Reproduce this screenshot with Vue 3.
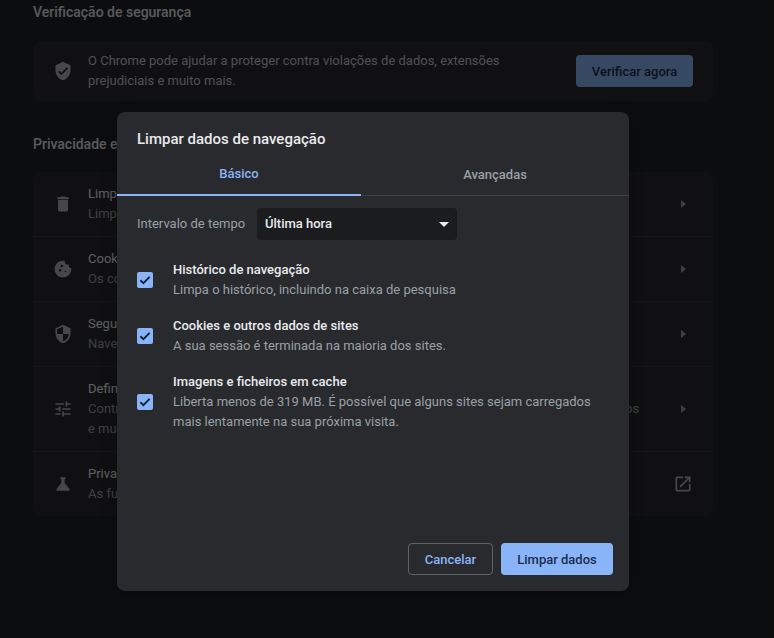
<template>
  <div class="page">
    <!-- Definições por trás do diálogo -->
    <div class="settings">
      <h2 class="section-title first">Verificação de segurança</h2>
      <div class="card check-card">
        <svg class="icon" viewBox="0 0 24 24"><path d="M12 1L3 5v6c0 5.55 3.84 10.74 9 12 5.16-1.26 9-6.45 9-12V5l-9-4zm-2 16l-4-4 1.41-1.41L10 14.17l6.59-6.59L18 9l-8 8z" /></svg>
        <p class="check-text">O Chrome pode ajudar a proteger contra violações de dados, extensões prejudiciais e muito mais.</p>
        <button class="check-btn">Verificar agora</button>
      </div>

      <h2 class="section-title">Privacidade e segurança</h2>
      <div class="card">
        <div class="row" v-for="row in linhas" :key="row.titulo">
          <svg class="icon" viewBox="0 0 24 24"><path :d="row.icon" fill-rule="evenodd" /></svg>
          <div class="row-text">
            <div class="row-title">{{ row.titulo }}</div>
            <div class="row-sub">{{ row.texto }}</div>
          </div>
          <svg v-if="row.externo" class="ext" viewBox="0 0 24 24"><path d="M19 19H5V5h7V3H5c-1.11 0-2 .9-2 2v14c0 1.1.89 2 2 2h14c1.1 0 2-.9 2-2v-7h-2v7zM14 3v2h3.59l-9.83 9.83 1.41 1.41L19 6.41V10h2V3h-7z" /></svg>
          <span v-else class="arrow"></span>
        </div>
      </div>
    </div>

    <div class="backdrop"></div>

    <!-- Diálogo -->
    <div class="dialog">
      <h1 class="dialog-title">Limpar dados de navegação</h1>

      <div class="tabs">
        <div class="tab active">Básico</div>
        <div class="tab">Avançadas</div>
      </div>

      <div class="dialog-body">
        <div class="interval">
          <span class="interval-label">Intervalo de tempo</span>
          <div class="select">
            <span>Última hora</span>
            <span class="caret"></span>
          </div>
        </div>

        <div class="item" v-for="item in opcoes" :key="item.titulo">
          <span class="checkbox">
            <svg viewBox="0 0 16 16"><path d="M3.4 8.2l3 3 6.2-6.3" fill="none" stroke="#15233f" stroke-width="2" /></svg>
          </span>
          <div>
            <div class="item-title">{{ item.titulo }}</div>
            <div class="item-sub">{{ item.texto }}</div>
          </div>
        </div>
      </div>

      <div class="footer">
        <button class="btn cancel">Cancelar</button>
        <button class="btn primary">Limpar dados</button>
      </div>
    </div>
  </div>
</template>

<script setup>
const COOKIE = 'M21.95 10.99c-1.79-.03-3.7-1.95-2.68-4.22-2.98 1-5.77-1.59-5.19-4.56C6.95.71 2 6.58 2 12c0 5.52 4.48 10 10 10 5.89 0 10.54-5.08 9.95-11.01zM8.5 15a1.5 1.5 0 1 1 0-3 1.5 1.5 0 0 1 0 3zm2-5a1.5 1.5 0 1 1 0-3 1.5 1.5 0 0 1 0 3zm4.5 6a1 1 0 1 1 0-2 1 1 0 0 1 0 2z'

const linhas = [
  {
    titulo: 'Limpar dados de navegação',
    texto: 'Limpar histórico, cookies, cache e muito mais',
    icon: 'M6 19c0 1.1.9 2 2 2h8c1.1 0 2-.9 2-2V7H6v12zM19 4h-3.5l-1-1h-5l-1 1H5v2h14V4z'
  },
  {
    titulo: 'Cookies e outros dados de sites',
    texto: 'Os cookies de terceiros estão bloqueados no modo de navegação anónima',
    icon: COOKIE
  },
  {
    titulo: 'Segurança',
    texto: 'Navegação segura (proteção contra Websites perigosos) e outras definições de segurança',
    icon: 'M12 1L3 5v6c0 5.55 3.84 10.74 9 12 5.16-1.26 9-6.45 9-12V5l-9-4zm0 10.99h7c-.53 4.12-3.28 7.79-7 8.94V12H5V6.3l7-3.11v8.8z'
  },
  {
    titulo: 'Definições de sites',
    texto: 'Controla as informações que os sites podem utilizar e mostrar (a localização, câmara, anúncios e muito mais)',
    icon: 'M3 17v2h6v-2H3zM3 5v2h10V5H3zm10 16v-2h8v-2h-8v-2h-2v6h2zM7 9v2H3v2h4v2h2V9H7zm14 4v-2H11v2h10zm-6-4h2V7h4V5h-4V3h-2v6z'
  },
  {
    titulo: 'Privacy Sandbox',
    texto: 'As funcionalidades de avaliação estão ativadas',
    icon: 'M19.8 18.4L14 10.67V6.5l1.35-1.69c.26-.33.03-.81-.39-.81H9.04c-.42 0-.65.48-.39.81L10 6.5v4.17L4.2 18.4c-.49.66-.02 1.6.8 1.6h14c.82 0 1.29-.94.8-1.6z',
    externo: true
  }
]

const opcoes = [
  { titulo: 'Histórico de navegação', texto: 'Limpa o histórico, incluindo na caixa de pesquisa' },
  { titulo: 'Cookies e outros dados de sites', texto: 'A sua sessão é terminada na maioria dos sites.' },
  { titulo: 'Imagens e ficheiros em cache', texto: 'Liberta menos de 319 MB. É possível que alguns sites sejam carregados mais lentamente na sua próxima visita.' }
]
</script>

<style>
html,
body {
  margin: 0;
  background: #202124;
}
</style>

<style scoped>
.page {
  position: relative;
  width: 774px;
  height: 638px;
  overflow: hidden;
  background: #202124;
  font-family: Roboto, "Liberation Sans", sans-serif;
  font-size: 13px;
  line-height: 20px;
  color: #e8eaed;
}

/* ===== Definições ===== */
.settings {
  width: 680px;
  margin-left: 33px;
}

.section-title {
  margin: 0;
  padding: 33px 0 18px;
  font-size: 14px;
  line-height: 20px;
  font-weight: 500;
  color: #dfe1e5;
}

.section-title.first {
  padding: 2px 0 19px;
}

.card {
  background: #292a2d;
  border-radius: 8px;
}

.check-card {
  display: flex;
  align-items: center;
  height: 60px;
  padding: 0 20px;
  gap: 15px;
  box-sizing: border-box;
}

.check-text {
  margin: 0;
  width: 484px;
  color: #c4c7cb;
}

.check-btn {
  width: 117px;
  height: 32px;
  flex: none;
  margin-left: auto;
  border: none;
  border-radius: 4px;
  background: #8ab4f8;
  color: #1b2c4c;
  font: 500 13px Roboto, sans-serif;
}

.icon {
  width: 20px;
  height: 20px;
  flex: none;
  fill: #b0b2b6;
}

.row {
  display: flex;
  align-items: center;
  gap: 15px;
  padding: 12px 20px;
  border-top: 1px solid #35363a;
}

.row:first-child {
  border-top: none;
}

.row-text {
  flex: 1;
  max-width: 555px;
  min-width: 0;
}

.row-sub {
  color: #9aa0a6;
}

.arrow {
  flex: none;
  width: 0;
  height: 0;
  margin-left: auto;
  margin-right: 7px;
  border-left: 5px solid #9aa0a6;
  border-top: 4px solid transparent;
  border-bottom: 4px solid transparent;
}

.ext {
  width: 20px;
  height: 20px;
  flex: none;
  margin-left: auto;
  fill: #b0b2b6;
}

.backdrop {
  position: absolute;
  inset: 0;
  background: rgba(0, 0, 0, 0.6);
}

/* ===== Diálogo ===== */
.dialog {
  position: absolute;
  left: 117px;
  top: 112px;
  width: 512px;
  height: 479px;
  display: flex;
  flex-direction: column;
  background: #292a2d;
  border-radius: 8px;
  box-shadow: 0 4px 16px rgba(0, 0, 0, 0.3);
}

.dialog-title {
  margin: 0;
  padding: 16px 20px 0;
  font-size: 15px;
  line-height: 22px;
  font-weight: 500;
  color: #e8eaed;
}

.tabs {
  display: grid;
  grid-template-columns: 244px 1fr;
  margin-top: 4px;
  height: 41px;
  border-bottom: 1px solid #3f4043;
}

.tab {
  display: flex;
  align-items: center;
  justify-content: center;
  font-weight: 500;
  color: #9aa0a6;
  margin-bottom: -1px;
}

.tab.active {
  color: #8ab4f8;
  border-bottom: 2px solid #8ab4f8;
}

.dialog-body {
  flex: 1;
  padding: 12px 20px 0;
}

.interval {
  display: flex;
  align-items: center;
  margin-bottom: 20px;
}

.interval-label {
  width: 120px;
  color: #9aa0a6;
}

.select {
  display: flex;
  align-items: center;
  justify-content: space-between;
  width: 200px;
  height: 32px;
  padding: 0 8px;
  box-sizing: border-box;
  background: #1b1c1e;
  border-radius: 4px;
  font-weight: 500;
  color: #e8eaed;
}

.caret {
  width: 0;
  height: 0;
  border-top: 5px solid #e8eaed;
  border-left: 5px solid transparent;
  border-right: 5px solid transparent;
}

.item {
  display: flex;
  align-items: center;
  gap: 20px;
  margin-bottom: 16px;
}

.checkbox {
  width: 16px;
  height: 16px;
  flex: none;
  background: #8ab4f8;
  border-radius: 2px;
}

.checkbox svg {
  display: block;
  width: 16px;
  height: 16px;
}

.item-title {
  font-weight: 500;
  color: #e8eaed;
}

.item-sub {
  color: #9aa0a6;
}

.footer {
  display: flex;
  justify-content: flex-end;
  gap: 8px;
  padding: 0 16px 16px;
}

.btn {
  height: 32px;
  border-radius: 4px;
  font: 500 13px Roboto, sans-serif;
  box-sizing: border-box;
}

.cancel {
  width: 85px;
  background: transparent;
  border: 1px solid #5f6368;
  color: #8ab4f8;
}

.primary {
  width: 112px;
  background: #8ab4f8;
  border: none;
  color: #1b2c4c;
}
</style>
